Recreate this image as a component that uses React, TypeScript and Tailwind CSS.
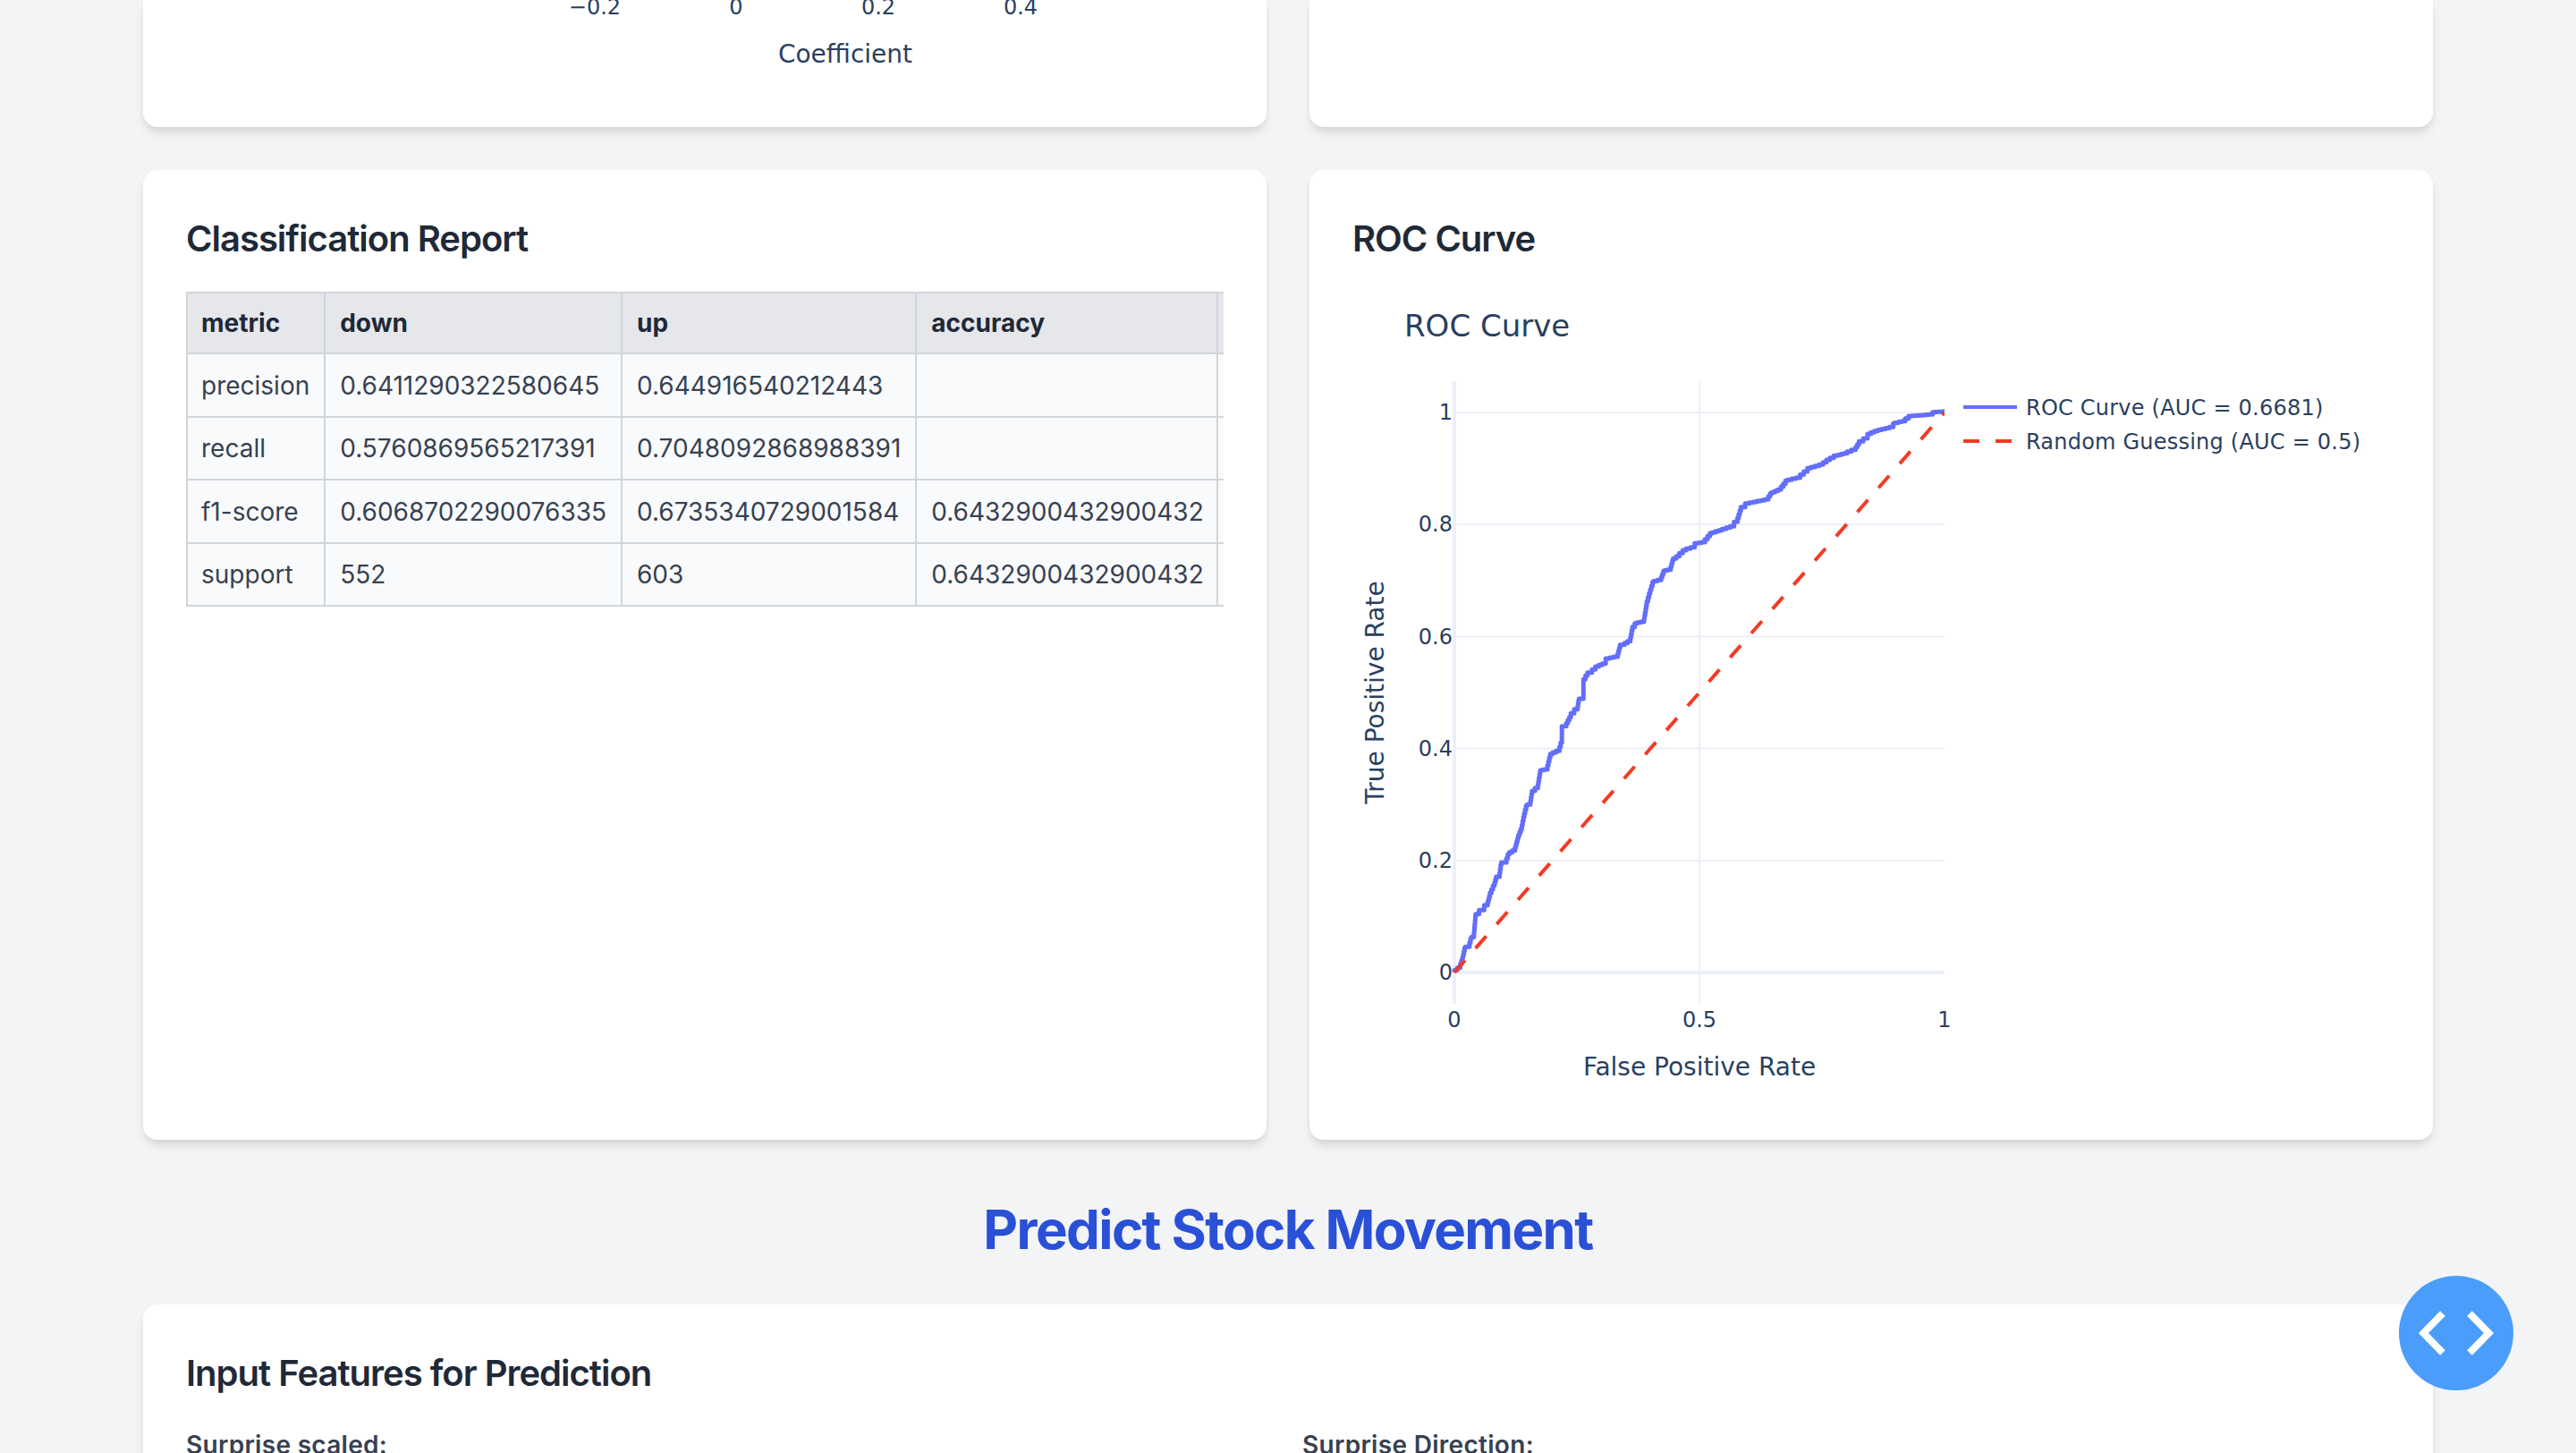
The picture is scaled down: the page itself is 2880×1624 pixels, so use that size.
import { Fragment } from 'react';

type Point = [number, number];

// traced from the plot, [x, y] in page pixels is built below
const lowerCurve: Point[] = [
  [68, 920], [85, 905], [92, 880], [100, 838], [112, 835], [118, 808], [125, 802], [130, 735], [140, 725],
  [155, 712], [165, 695], [172, 665], [185, 630], [190, 610], [200, 600], [205, 560], [220, 552], [228, 525],
  [245, 512], [255, 470], [265, 440], [272, 400], [280, 362], [290, 358], [295, 322], [312, 302], [320, 245],
  [340, 240], [348, 200], [355, 188], [375, 178], [382, 150], [382, 110], [395, 95], [408, 65], [428, 38],
  [432, 8], [445, 3],
];

const upperCurve: Point[] = [
  [445, 1000], [457, 975], [470, 965], [490, 945], [510, 935], [522, 918], [545, 912], [552, 882], [565, 872],
  [582, 860], [588, 825], [602, 800], [622, 795], [630, 740], [640, 700], [650, 662], [672, 655], [682, 625],
  [700, 620], [707, 590], [725, 575], [745, 555], [770, 545], [780, 532], [800, 528], [822, 498], [850, 488],
  [885, 475], [895, 460], [905, 422], [930, 398], [985, 385], [995, 365], [1022, 352], [1042, 322], [1078, 312],
  [1110, 280], [1145, 268], [1165, 252], [1188, 238], [1215, 230], [1240, 218], [1250, 200], [1275, 180],
  [1285, 165], [1305, 155], [1350, 142], [1355, 130], [1385, 122], [1405, 105], [1465, 100], [1472, 92], [1500, 90],
];

const tracePoints: Point[] = [
  ...lowerCurve.map(([x, y]): Point => [1600 + x / 2.613, 780 + y / 3]),
  ...upperCurve.map(([x, y]): Point => [1600 + x / 2.613, 430 + y / 3]),
];

function toStairs(points: Point[]) {
  const out: string[] = [];
  points.forEach(([x, y], i) => {
    if (i === 0) {
      out.push(`${x},${y}`);
      return;
    }
    const [px, py] = points[i - 1];
    const steps = Math.max(1, Math.round(Math.max(Math.abs(x - px), Math.abs(y - py)) / 4));
    for (let s = 1; s <= steps; s++) {
      const nx = px + ((x - px) * s) / steps;
      const ny = py + ((y - py) * s) / steps;
      const ox = px + ((x - px) * (s - 1)) / steps;
      out.push(`${ox},${ny}`, `${nx},${ny}`);
    }
  });
  return out.join(' ');
}

const yTicks = [
  { label: '1', y: 461 },
  { label: '0.8', y: 586 },
  { label: '0.6', y: 711.5 },
  { label: '0.4', y: 836.5 },
  { label: '0.2', y: 962 },
];

const rows = [
  ['precision', '0.6411290322580645', '0.644916540212443', ''],
  ['recall', '0.5760869565217391', '0.7048092868988391', ''],
  ['f1-score', '0.6068702290076335', '0.6735340729001584', '0.6432900432900432'],
  ['support', '552', '603', '0.6432900432900432'],
];

const colPadding = ['pl-[15px] pr-4', 'px-4', 'px-4', 'pl-4 pr-[14px]', 'px-4'];

const plotText = "font-['DejaVu_Sans','Liberation_Sans',sans-serif] fill-[#2a3f5f]";

function RocChart() {
  return (
    <svg viewBox="1512 326 1160 900" className="block w-[1160px] h-[900px]">
      <defs>
        <clipPath id="roc-plot">
          <rect x="1620" y="426" width="554" height="696" />
        </clipPath>
      </defs>

      <text x="1570" y="376" className={`${plotText} text-[34px]`}>ROC Curve</text>

      {yTicks.map(tick => (
        <Fragment key={tick.label}>
          <line x1="1626" x2="2174" y1={tick.y} y2={tick.y} stroke="#ebf0f8" strokeWidth="2" />
          <text x="1624" y={tick.y + 8} textAnchor="end" className={`${plotText} text-[24px]`}>{tick.label}</text>
        </Fragment>
      ))}
      <line x1="1900" x2="1900" y1="426" y2="1122" stroke="#ebf0f8" strokeWidth="2" />
      <line x1="1626" x2="2174" y1="1087" y2="1087" stroke="#ebf0f8" strokeWidth="4" />
      <line x1="1626" x2="1626" y1="426" y2="1122" stroke="#ebf0f8" strokeWidth="4" />
      <text x="1624" y="1095" textAnchor="end" className={`${plotText} text-[24px]`}>0</text>

      <g clipPath="url(#roc-plot)">
        <polyline points={toStairs(tracePoints)} fill="none" stroke="#636efa" strokeWidth="5" strokeLinejoin="round" />
        <line x1="1626" y1="1087" x2="2174" y2="461" stroke="#f23a24" strokeWidth="4" strokeDasharray="18 18" />
      </g>

      <text x="1626" y="1148" textAnchor="middle" className={`${plotText} text-[24px]`}>0</text>
      <text x="1900" y="1148" textAnchor="middle" className={`${plotText} text-[24px]`}>0.5</text>
      <text x="2174" y="1148" textAnchor="middle" className={`${plotText} text-[24px]`}>1</text>
      <text x="1900" y="1202" textAnchor="middle" className={`${plotText} text-[28px]`}>False Positive Rate</text>
      <text
        x="0"
        y="0"
        textAnchor="middle"
        transform="translate(1547 774) rotate(-90)"
        className={`${plotText} text-[28px]`}
      >
        True Positive Rate
      </text>

      <line x1="2195" x2="2255" y1="455" y2="455" stroke="#636efa" strokeWidth="4" />
      <text x="2265" y="464" className={`${plotText} text-[24px] tracking-[0.22px]`}>ROC Curve (AUC = 0.6681)</text>
      <line x1="2195" x2="2255" y1="493" y2="493" stroke="#f23a24" strokeWidth="4" strokeDasharray="18 18" />
      <text x="2265" y="502" className={`${plotText} text-[24px] tracking-[0.22px]`}>Random Guessing (AUC = 0.5)</text>
    </svg>
  );
}

function ReportTable() {
  return (
    <div className="w-[1160px] overflow-hidden">
      <table className="border-collapse text-[28px] whitespace-nowrap">
        <thead>
          <tr className="bg-[#e5e7eb] text-left text-[#1f2937]">
            {['metric', 'down', 'up', 'accuracy', ''].map((head, i) => (
              <th key={i} className={`border-2 border-[#d1d5db] py-3 leading-[42px] font-bold min-w-[100px] ${colPadding[i]}`}>
                {head}
              </th>
            ))}
          </tr>
        </thead>
        <tbody>
          {rows.map(row => (
            <tr key={row[0]} className="bg-[#f9fafb] text-[#374151]">
              {row.map((cell, i) => (
                <td key={i} className={`border-2 border-[#d1d5db] pt-[12.5px] pb-3 leading-[44px] ${colPadding[i]}`}>{cell}</td>
              ))}
              <td className="border-2 border-[#d1d5db] px-4 py-3" />
            </tr>
          ))}
        </tbody>
      </table>
    </div>
  );
}

const cardClass = 'bg-white rounded-2xl shadow-[0_8px_12px_-2px_rgba(0,0,0,0.1),0_4px_8px_-2px_rgba(0,0,0,0.06)]';
const cardTitle = 'text-[40px] leading-[58px] font-semibold tracking-[-0.025em] text-[#1f2937] mb-[30px]';
const fieldLabel = 'text-[28px] leading-[42px] font-semibold tracking-[0.3px] text-[#374151]';

export default function App() {
  return (
    <div className="w-[2880px] h-[1624px] overflow-hidden bg-[#f3f4f6] px-[160px] font-['Inter',sans-serif]">
      <div className="grid grid-cols-2 gap-12">
        <div className={`${cardClass} h-[142px] rounded-t-none`}>
          <svg viewBox="160 0 1256 142" className="block w-full h-[142px]">
            <text x="665" y="16" textAnchor="middle" className={`${plotText} text-[24px]`}>−0.2</text>
            <text x="823" y="16" textAnchor="middle" className={`${plotText} text-[24px]`}>0</text>
            <text x="982" y="16" textAnchor="middle" className={`${plotText} text-[24px]`}>0.2</text>
            <text x="1141" y="16" textAnchor="middle" className={`${plotText} text-[24px]`}>0.4</text>
            <text x="945" y="70" textAnchor="middle" className={`${plotText} text-[28px]`}>Coefficient</text>
          </svg>
        </div>
        <div className={`${cardClass} h-[142px] rounded-t-none`} />
      </div>

      <div className="grid grid-cols-2 gap-12 mt-12">
        <div className={`${cardClass} p-12`}>
          <h3 className={cardTitle}>Classification Report</h3>
          <ReportTable />
        </div>
        <div className={`${cardClass} p-12`}>
          <h3 className={cardTitle}>ROC Curve</h3>
          <RocChart />
        </div>
      </div>

      <h2 className="mt-16 mb-12 text-center text-[60px] leading-[72px] font-bold tracking-[-0.027em] text-[#2a50d7]">
        Predict Stock Movement
      </h2>

      <div className={`${cardClass} p-12`}>
        <h3 className={cardTitle}>Input Features for Prediction</h3>
        <div className="grid grid-cols-2 gap-8">
          <label className={fieldLabel}>Surprise scaled:</label>
          <label className={fieldLabel}>Surprise Direction:</label>
        </div>
      </div>

      <button className="fixed left-[2682px] top-[1426px] w-32 h-32 rounded-full bg-[#4a9dfb] flex items-center justify-center">
        <svg viewBox="0 0 128 128" className="w-32 h-32">
          <path d="M49 42 L27.5 64 L49 86 M79 42 L100.5 64 L79 86" fill="none" stroke="#ffffff" strokeWidth="8" />
        </svg>
      </button>
    </div>
  );
}
